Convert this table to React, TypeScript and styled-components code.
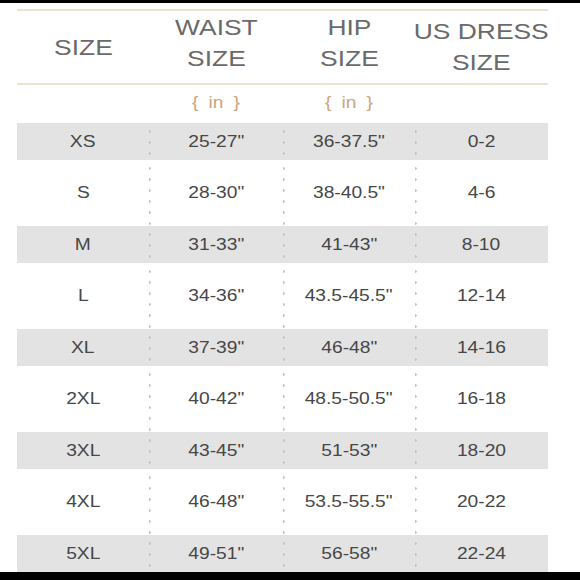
import React from 'react';
import styled, { createGlobalStyle } from 'styled-components';

const GlobalStyle = createGlobalStyle`
  html, body {
    margin: 0;
    padding: 0;
    background: #fff;
  }
  body {
    font-family: "Liberation Sans", Arial, sans-serif;
  }
`;

interface SizeRow {
    size: string,
    waist: string,
    hip: string,
    dress: string
}

const rows: SizeRow[] = [
    { size: 'XS', waist: '25-27"', hip: '36-37.5"', dress: '0-2' },
    { size: 'S', waist: '28-30"', hip: '38-40.5"', dress: '4-6' },
    { size: 'M', waist: '31-33"', hip: '41-43"', dress: '8-10' },
    { size: 'L', waist: '34-36"', hip: '43.5-45.5"', dress: '12-14' },
    { size: 'XL', waist: '37-39"', hip: '46-48"', dress: '14-16' },
    { size: '2XL', waist: '40-42"', hip: '48.5-50.5"', dress: '16-18' },
    { size: '3XL', waist: '43-45"', hip: '51-53"', dress: '18-20' },
    { size: '4XL', waist: '46-48"', hip: '53.5-55.5"', dress: '20-22' },
    { size: '5XL', waist: '49-51"', hip: '56-58"', dress: '22-24' },
];

const App = () => {
    return (
        <>
            <GlobalStyle />
            <Frame>
                <EdgeBar />
                <Chart>
                    <HeaderRow>
                        <HeadCell><HeadText>SIZE</HeadText></HeadCell>
                        <HeadCell $lift><HeadText>WAIST<br />SIZE</HeadText></HeadCell>
                        <HeadCell $lift><HeadText>HIP<br />SIZE</HeadText></HeadCell>
                        <HeadCell><HeadText>US DRESS<br />SIZE</HeadText></HeadCell>
                    </HeaderRow>
                    <UnitRow>
                        <span />
                        <Unit>{'{ in }'}</Unit>
                        <Unit>{'{ in }'}</Unit>
                        <span />
                    </UnitRow>
                    {rows.map((r, i) => (
                        <Row key={r.size} $shaded={i % 2 === 0}>
                            <Cell><CellText>{r.size}</CellText></Cell>
                            <Cell $dotted><CellText>{r.waist}</CellText></Cell>
                            <Cell $dotted><CellText>{r.hip}</CellText></Cell>
                            <Cell $dotted><CellText>{r.dress}</CellText></Cell>
                        </Row>
                    ))}
                </Chart>
                <EdgeBar $grow />
            </Frame>
        </>
    );
};

const Frame = styled.div`
    width: 580px;
    height: 580px;
    display: flex;
    flex-direction: column;
    overflow: hidden;
`;

const EdgeBar = styled.div<{ $grow?: boolean }>`
    background: #000;
    height: 3px;
    flex: ${p => (p.$grow ? '1' : '0 0 3px')};
`;

const Chart = styled.div`
    width: 531px;
    margin: 6px 0 0 17px;
`;

const columns = `
    display: grid;
    grid-template-columns: 132px 134px 132px 133px;
`;

const HeaderRow = styled.div`
    ${columns}
    height: 72px;
    border-top: 2px solid #ece2cf;
    border-bottom: 2px solid #ece2cf;
`;

const HeadCell = styled.div<{ $lift?: boolean }>`
    display: flex;
    align-items: center;
    justify-content: center;
    padding-bottom: ${p => (p.$lift ? '9px' : '0')};
`;

const HeadText = styled.span`
    display: inline-block;
    font-size: 22px;
    line-height: 31px;
    color: #6a6a6a;
    text-align: center;
    transform: scaleX(1.2);
`;

const UnitRow = styled.div`
    ${columns}
    height: 38px;
    align-items: center;
`;

const Unit = styled.span`
    display: block;
    text-align: center;
    font-size: 16px;
    word-spacing: 4px;
    color: #cba57c;
    padding-bottom: 2px;
    transform: scaleX(1.2);
`;

const Row = styled.div<{ $shaded: boolean }>`
    ${columns}
    height: ${p => (p.$shaded ? '37px' : '66px')};
    background: ${p => (p.$shaded ? '#e3e3e3' : '#fff')};
`;

const Cell = styled.div<{ $dotted?: boolean }>`
    display: flex;
    align-items: center;
    justify-content: center;
    background-image: ${p => (p.$dotted
        ? 'radial-gradient(circle, #cbbfac 0.9px, rgba(203,191,172,0) 1.6px)'
        : 'none')};
    background-size: 3px 11px;
    background-repeat: repeat-y;
    background-position: -1px 3px;
`;

const CellText = styled.span`
    display: inline-block;
    font-size: 16px;
    color: #474747;
    transform: scaleX(1.2);
`;

export default App;
